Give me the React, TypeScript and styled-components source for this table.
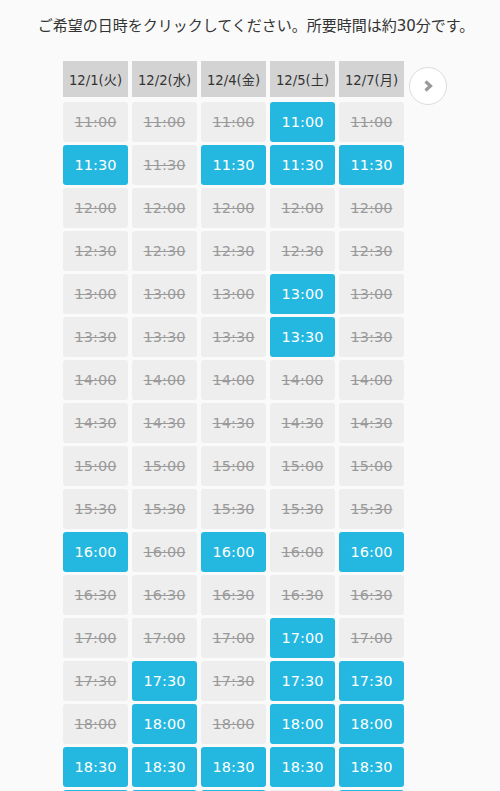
import * as React from "react";
import styled, { createGlobalStyle } from "styled-components";

const GlobalStyle = createGlobalStyle`
  body {
    margin: 0;
    background: #fafafa;
    font-family: "DejaVu Sans", "Noto Sans CJK JP", sans-serif;
    color: #333;
  }
`;

const Page = styled.div`
  display: flex;
  flex-direction: column;
`;

const Lead = styled.p`
  margin: 15px 0 24px;
  padding-left: 12px;
  font-size: 15px;
  line-height: 22px;
  text-align: center;
  color: #333;
`;

const Board = styled.div`
  display: flex;
  align-items: flex-start;
  padding-left: 63px;
`;

const Grid = styled.div`
  display: grid;
  grid-template-columns: repeat(5, 65px);
  column-gap: 4px;
  row-gap: 3px;
`;

const DayHead = styled.div`
  height: 36px;
  margin-bottom: 2px;
  background: #d3d3d3;
  display: flex;
  align-items: center;
  justify-content: center;
  font-size: 13.2px;
  color: #333;
`;

const Slot = styled.div<{ $open: boolean }>`
  height: 40px;
  border-radius: 3px;
  display: flex;
  align-items: center;
  justify-content: center;
  font-size: 14.5px;
  background: ${(p) => (p.$open ? "#24b8e0" : "#eeeeee")};
  color: ${(p) => (p.$open ? "#ffffff" : "#9a9a9a")};
  text-decoration: ${(p) => (p.$open ? "none" : "line-through")};
  cursor: ${(p) => (p.$open ? "pointer" : "default")};
`;

const NextButton = styled.button`
  width: 38px;
  height: 38px;
  margin: 6px 0 0 5px;
  padding: 0;
  border-radius: 50%;
  border: 1px solid #dcdcdc;
  background: #ffffff;
  display: flex;
  align-items: center;
  justify-content: center;
  cursor: pointer;
`;

const days = ["12/1(火)", "12/2(水)", "12/4(金)", "12/5(土)", "12/7(月)"];

// 1 = open slot, 0 = taken
const slots: [string, number[]][] = [
  ["11:00", [0, 0, 0, 1, 0]],
  ["11:30", [1, 0, 1, 1, 1]],
  ["12:00", [0, 0, 0, 0, 0]],
  ["12:30", [0, 0, 0, 0, 0]],
  ["13:00", [0, 0, 0, 1, 0]],
  ["13:30", [0, 0, 0, 1, 0]],
  ["14:00", [0, 0, 0, 0, 0]],
  ["14:30", [0, 0, 0, 0, 0]],
  ["15:00", [0, 0, 0, 0, 0]],
  ["15:30", [0, 0, 0, 0, 0]],
  ["16:00", [1, 0, 1, 0, 1]],
  ["16:30", [0, 0, 0, 0, 0]],
  ["17:00", [0, 0, 0, 1, 0]],
  ["17:30", [0, 1, 0, 1, 1]],
  ["18:00", [0, 1, 0, 1, 1]],
  ["18:30", [1, 1, 1, 1, 1]],
  ["19:00", [1, 1, 1, 0, 1]],
];

const App: React.FC = () => {
  return (
    <Page>
      <GlobalStyle />
      <Lead>ご希望の日時をクリックしてください。所要時間は約30分です。</Lead>
      <Board>
        <Grid>
          {days.map((d) => (
            <DayHead key={d}>{d}</DayHead>
          ))}
          {slots.map(([time, row]) =>
            row.map((open, i) => (
              <Slot key={time + i} $open={open === 1}>
                {time}
              </Slot>
            ))
          )}
        </Grid>
        <NextButton aria-label="next">
          <svg width="14" height="14" viewBox="0 0 14 14">
            <polyline
              points="4.5,2.5 9.5,7 4.5,11.5"
              fill="none"
              stroke="#9a9a9a"
              strokeWidth="3.2"
            />
          </svg>
        </NextButton>
      </Board>
    </Page>
  );
};

export default App;
